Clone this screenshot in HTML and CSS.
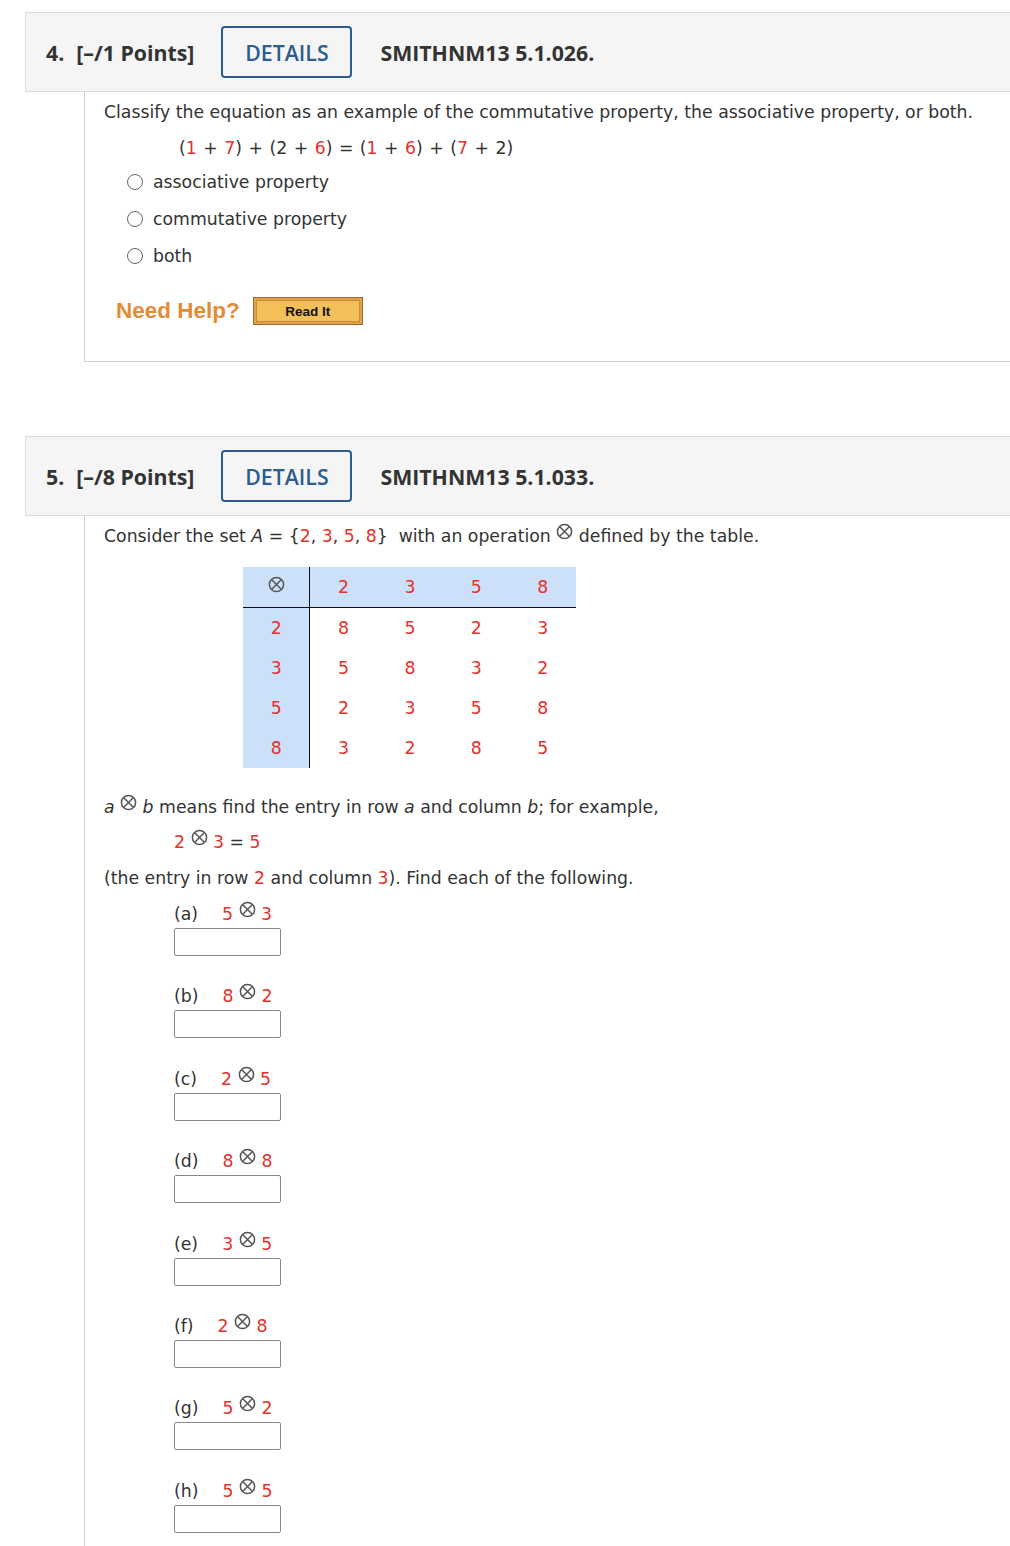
FILE: index.html
```html
<!DOCTYPE html>
<html>
<head>
<meta charset="utf-8">
<link rel="stylesheet" href="styles.css">
</head>
<body>
<div class="page">
  <section class="question q4">
    <div class="qhead">
      <span class="qnum">4.</span>
      <span class="qpts">[–/1 Points]</span>
      <span class="details">DETAILS</span>
      <span class="qcode">SMITHNM13 5.1.026.</span>
    </div>
    <div class="qbody">
      <p class="prompt">Classify the equation as an example of the commutative property, the associative property, or both.</p>
      <p class="equation">(<span class="r">1</span> + <span class="r">7</span>) + (2 + <span class="r">6</span>) = (<span class="r">1</span> + <span class="r">6</span>) + (<span class="r">7</span> + 2)</p>
      <ul class="choices">
        <li><span class="radio"></span>associative property</li>
        <li><span class="radio"></span>commutative property</li>
        <li><span class="radio"></span>both</li>
      </ul>
      <div class="help">
        <span class="needhelp">Need Help?</span>
        <span class="readit"><span class="readit-inner">Read It</span></span>
      </div>
    </div>
  </section>

  <section class="question q5">
    <div class="qhead">
      <span class="qnum">5.</span>
      <span class="qpts">[–/8 Points]</span>
      <span class="details">DETAILS</span>
      <span class="qcode">SMITHNM13 5.1.033.</span>
    </div>
    <div class="qbody">
      <p class="prompt">Consider the set <i>A</i> = {<span class="r">2</span>, <span class="r">3</span>, <span class="r">5</span>, <span class="r">8</span>} &nbsp;with an operation <svg class="otimes" viewBox="0 0 18 18"><circle cx="9" cy="9" r="7.5"/><path d="M4 4L14 14M14 4L4 14"/></svg> defined by the table.</p>
      <table class="optable">
        <tr class="hrow"><th class="corner"><svg class="otimes" viewBox="0 0 18 18"><circle cx="9" cy="9" r="7.5"/><path d="M4 4L14 14M14 4L4 14"/></svg></th><th>2</th><th>3</th><th>5</th><th>8</th></tr>
        <tr><th>2</th><td>8</td><td>5</td><td>2</td><td>3</td></tr>
        <tr><th>3</th><td>5</td><td>8</td><td>3</td><td>2</td></tr>
        <tr><th>5</th><td>2</td><td>3</td><td>5</td><td>8</td></tr>
        <tr><th>8</th><td>3</td><td>2</td><td>8</td><td>5</td></tr>
      </table>
      <p class="means"><i>a</i> <svg class="otimes" viewBox="0 0 18 18"><circle cx="9" cy="9" r="7.5"/><path d="M4 4L14 14M14 4L4 14"/></svg> <i>b</i> means find the entry in row <i>a</i> and column <i>b</i>; for example,</p>
      <p class="example"><span class="r">2</span> <svg class="otimes" viewBox="0 0 18 18"><circle cx="9" cy="9" r="7.5"/><path d="M4 4L14 14M14 4L4 14"/></svg> <span class="r">3</span> = <span class="r">5</span></p>
      <p class="entry">(the entry in row <span class="r">2</span> and column <span class="r">3</span>). Find each of the following.</p>
      <div class="parts">
        <div class="part"><div class="plabel"><span class="pl">(a)</span><span class="r">5</span> <svg class="otimes" viewBox="0 0 18 18"><circle cx="9" cy="9" r="7.5"/><path d="M4 4L14 14M14 4L4 14"/></svg> <span class="r">3</span></div><div class="box"></div></div>
        <div class="part"><div class="plabel"><span class="pl">(b)</span><span class="r">8</span> <svg class="otimes" viewBox="0 0 18 18"><circle cx="9" cy="9" r="7.5"/><path d="M4 4L14 14M14 4L4 14"/></svg> <span class="r">2</span></div><div class="box"></div></div>
        <div class="part"><div class="plabel"><span class="pl">(c)</span><span class="r">2</span> <svg class="otimes" viewBox="0 0 18 18"><circle cx="9" cy="9" r="7.5"/><path d="M4 4L14 14M14 4L4 14"/></svg> <span class="r">5</span></div><div class="box"></div></div>
        <div class="part"><div class="plabel"><span class="pl">(d)</span><span class="r">8</span> <svg class="otimes" viewBox="0 0 18 18"><circle cx="9" cy="9" r="7.5"/><path d="M4 4L14 14M14 4L4 14"/></svg> <span class="r">8</span></div><div class="box"></div></div>
        <div class="part"><div class="plabel"><span class="pl">(e)</span><span class="r">3</span> <svg class="otimes" viewBox="0 0 18 18"><circle cx="9" cy="9" r="7.5"/><path d="M4 4L14 14M14 4L4 14"/></svg> <span class="r">5</span></div><div class="box"></div></div>
        <div class="part"><div class="plabel"><span class="pl">(f)</span><span class="r">2</span> <svg class="otimes" viewBox="0 0 18 18"><circle cx="9" cy="9" r="7.5"/><path d="M4 4L14 14M14 4L4 14"/></svg> <span class="r">8</span></div><div class="box"></div></div>
        <div class="part"><div class="plabel"><span class="pl">(g)</span><span class="r">5</span> <svg class="otimes" viewBox="0 0 18 18"><circle cx="9" cy="9" r="7.5"/><path d="M4 4L14 14M14 4L4 14"/></svg> <span class="r">2</span></div><div class="box"></div></div>
        <div class="part"><div class="plabel"><span class="pl">(h)</span><span class="r">5</span> <svg class="otimes" viewBox="0 0 18 18"><circle cx="9" cy="9" r="7.5"/><path d="M4 4L14 14M14 4L4 14"/></svg> <span class="r">5</span></div><div class="box"></div></div>
      </div>
    </div>
  </section>
</div>
</body>
</html>
```

FILE: styles.css
```css
html, body {
  margin: 0;
  padding: 0;
  background: #fff;
}
body {
  font-family: "DejaVu Sans", Verdana, sans-serif;
  font-size: 17.3px;
  color: #333;
  overflow: hidden;
}
.page {
  padding: 12px 0 0 25px;
}
.question + .question {
  margin-top: 74px;
}
.qhead {
  display: flex;
  align-items: center;
  height: 78px;
  background: #f5f5f5;
  border: 1px solid #dcdcdc;
  border-right: none;
  padding-left: 20px;
  font-family: "Open Sans", sans-serif;
  font-weight: 700;
  font-size: 21.3px;
  color: #333;
}
.qnum {
  margin-right: 12px;
}
.qpts {
  margin-right: 27px;
}
.details {
  box-sizing: border-box;
  width: 131px;
  height: 52px;
  border: 2px solid #2b5d90;
  border-radius: 4px;
  display: flex;
  align-items: center;
  justify-content: center;
  color: #2b5d90;
  font-weight: 600;
  margin-right: 28px;
}
.qbody {
  margin-left: 59px;
  border-left: 1px solid #cfcfcf;
  padding-left: 19px;
}
.q4 .qbody {
  border-bottom: 1px solid #cfcfcf;
  padding-top: 10px;
  height: 259px;
}
.q5 .qbody {
  padding-top: 10px;
  padding-bottom: 40px;
}
p {
  margin: 0;
  line-height: 20px;
}
.r {
  color: #e3322b;
}
.equation {
  margin: 16px 0 0 75px;
  word-spacing: 1px;
}
.choices {
  list-style: none;
  margin: 14px 0 0 0;
  padding: 0 0 0 23px;
}
.choices li {
  display: flex;
  align-items: center;
  height: 20px;
  margin-bottom: 17px;
}
.radio {
  box-sizing: border-box;
  width: 16px;
  height: 16px;
  border: 1.5px solid #666;
  border-radius: 50%;
  margin-right: 10px;
  background: #fff;
}
.help {
  display: flex;
  align-items: center;
  margin: 31px 0 0 12px;
}
.needhelp {
  font-family: "Liberation Sans", Arial, sans-serif;
  font-weight: 700;
  font-size: 22.5px;
  color: #e38b37;
  margin-right: 13px;
}
.readit {
  box-sizing: border-box;
  display: flex;
  width: 110px;
  height: 28px;
  border: 1px solid #a06a32;
  background: #e0a248;
  padding: 2px;
}
.readit-inner {
  flex: 1;
  display: flex;
  align-items: center;
  justify-content: center;
  background: #f2bf58;
  border: 1px solid #c98a3a;
  font-family: "Liberation Sans", Arial, sans-serif;
  font-weight: 700;
  font-size: 13.5px;
  color: #111;
}
.otimes {
  width: 17px;
  height: 17px;
  vertical-align: -1px;
  position: relative;
  top: -3px;
}
.otimes circle, .otimes path {
  fill: none;
  stroke: #555;
  stroke-width: 1.6;
}
.optable {
  border-collapse: collapse;
  margin: 21px 0 0 139px;
}
.optable th, .optable td {
  width: 66.4px;
  height: 40px;
  padding: 0;
  text-align: center;
  color: #e3322b;
  font-weight: normal;
}
.optable th {
  background: #cce1f9;
}
.optable tr th:first-child {
  border-right: 1px solid #111;
}
.optable .hrow th {
  border-bottom: 1px solid #111;
}
.optable .corner .otimes {
  top: -1px;
}
.means {
  margin-top: 29px;
}
.example {
  margin: 15px 0 0 70px;
}
.entry {
  margin-top: 16px;
}
.parts {
  margin: 16px 0 0 70px;
}
.part {
  margin-bottom: 30.4px;
}
.plabel {
  line-height: 20px;
}
.pl {
  display: inline-block;
  margin-right: 24px;
}
.box {
  box-sizing: border-box;
  width: 107px;
  height: 28px;
  border: 1px solid #888;
  border-radius: 2px;
  margin-top: 4px;
}
```
